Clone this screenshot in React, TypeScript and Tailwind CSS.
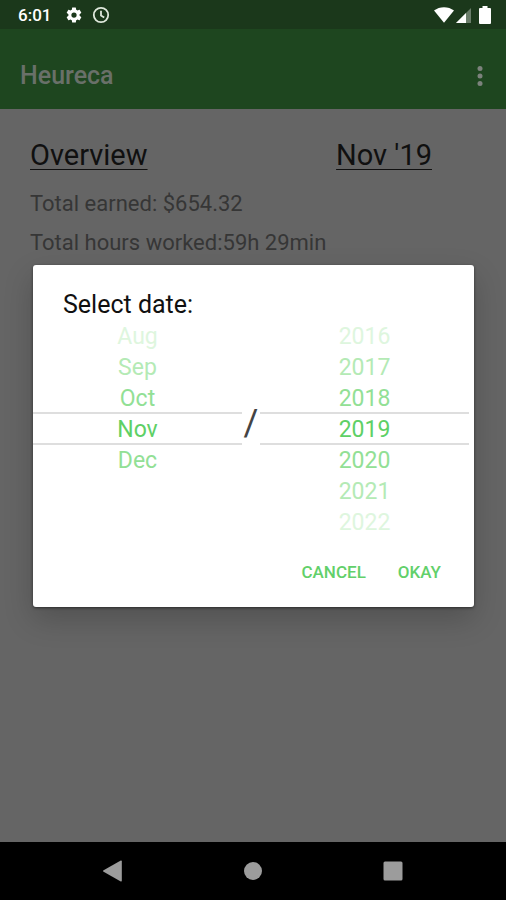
import { useState } from "react";

const months = ["Aug", "Sep", "Oct", "Nov", "Dec"];
const years = ["2016", "2017", "2018", "2019", "2020", "2021", "2022"];

// text colour by distance from the selected row
const fade = ["text-[#5ed065]", "text-[#92e095]", "text-[#b4eab5]", "text-[#def6de]"];

function StatusBar() {
  return (
    <div className="flex h-[29px] shrink-0 items-center justify-between bg-[#1b381b] pt-px pl-[18px] pr-[15px] text-white">
      <div className="flex items-center">
        <span className="text-[17px] leading-5 font-medium">6:01</span>
        <svg className="ml-[14px]" width="18" height="18" viewBox="0 0 24 24" fill="currentColor" aria-hidden="true">
          <path d="M19.43 12.98c.04-.32.07-.64.07-.98s-.03-.66-.07-.98l2.11-1.65c.19-.15.24-.42.12-.64l-2-3.46c-.12-.22-.39-.3-.61-.22l-2.49 1c-.52-.4-1.08-.73-1.69-.98l-.38-2.65A.49.49 0 0 0 14 2h-4c-.25 0-.46.18-.49.42l-.38 2.65c-.61.25-1.17.59-1.69.98l-2.49-1c-.23-.09-.49 0-.61.22l-2 3.46c-.13.22-.07.49.12.64l2.11 1.65c-.04.32-.07.65-.07.98s.03.66.07.98l-2.11 1.65c-.19.15-.24.42-.12.64l2 3.46c.12.22.39.3.61.22l2.49-1c.52.4 1.08.73 1.69.98l.38 2.65c.03.24.24.42.49.42h4c.25 0 .46-.18.49-.42l.38-2.65c.61-.25 1.17-.59 1.69-.98l2.49 1c.23.09.49 0 .61-.22l2-3.46c.12-.22.07-.49-.12-.64l-2.11-1.65zM12 15.5a3.5 3.5 0 1 1 0-7 3.5 3.5 0 0 1 0 7z" />
        </svg>
        <svg className="ml-[9px]" width="18" height="18" viewBox="0 0 18 18" fill="none" stroke="#dfe8dc" strokeWidth="1.8" aria-hidden="true">
          <circle cx="9" cy="9" r="7.2" />
          <path d="M9 4.8V9.4l3.2 2" />
        </svg>
      </div>
      <div className="flex items-center">
        <svg width="20" height="16" viewBox="0 0 20 16" fill="currentColor" aria-hidden="true">
          <path d="M0 3.6C5.6-.9 14.4-.9 20 3.6L10 15.8z" />
        </svg>
        <svg className="ml-[2px]" width="16" height="16" viewBox="0 0 16 16" fill="currentColor" aria-hidden="true">
          <path d="M0 16 15 1v15z" opacity=".35" />
          <path d="M0 16 10 6v10z" />
        </svg>
        <svg className="ml-[7px]" width="12" height="18" viewBox="0 0 12 18" fill="currentColor" aria-hidden="true">
          <path d="M3.5 0h5v2H11a1 1 0 0 1 1 1v14a1 1 0 0 1-1 1H1a1 1 0 0 1-1-1V3a1 1 0 0 1 1-1h2.5z" />
        </svg>
      </div>
    </div>
  );
}

function AppBar() {
  return (
    <header className="flex h-20 items-center justify-between bg-[#1e461f] pt-[13px] pl-5 pr-4">
      <h1 className="text-[25px] leading-8 font-medium text-[#697069]">Heureca</h1>
      <button type="button" aria-label="More options" className="text-[#7c827c]">
        <svg width="20" height="24" viewBox="0 0 20 24" fill="currentColor" aria-hidden="true">
          <circle cx="10" cy="4.5" r="2.5" />
          <circle cx="10" cy="12" r="2.5" />
          <circle cx="10" cy="19.5" r="2.5" />
        </svg>
      </button>
    </header>
  );
}

function Wheel({
  label,
  items,
  value,
  onChange,
}: {
  label: string;
  items: string[];
  value: string;
  onChange: (v: string) => void;
}) {
  const selected = items.indexOf(value);
  return (
    <div role="listbox" aria-label={label} className="flex flex-1 flex-col">
      {items.map((item, i) => (
        <button
          key={item}
          type="button"
          role="option"
          aria-selected={i === selected}
          onClick={() => onChange(item)}
          className={`h-[31px] text-center text-[23px] leading-[31px] ${fade[Math.min(Math.abs(i - selected), 3)]} ${
            i === selected ? "shadow-[0_-2px_0_#dedede,inset_0_-2px_0_#dedede]" : ""
          }`}
        >
          {item}
        </button>
      ))}
    </div>
  );
}

function DateDialog() {
  const [month, setMonth] = useState("Nov");
  const [year, setYear] = useState("2019");

  return (
    <div className="absolute inset-0 flex items-center pl-[33px] pr-8">
      <div
        role="dialog"
        aria-labelledby="dialog-title"
        className="w-full rounded-[3px] bg-white pt-6 pb-[15px] shadow-[0_12px_30px_rgba(0,0,0,0.2),0_1px_3px_rgba(0,0,0,0.5)]"
      >
        <h2 id="dialog-title" className="px-[30px] text-[25px] leading-8 text-[#101010]">
          Select date:
        </h2>
        <div className="flex pr-[5px]">
          <Wheel label="Month" items={months} value={month} onChange={setMonth} />
          <span className="w-[18px] self-center pb-3 text-center text-[36px] leading-10 text-[#444]">/</span>
          <Wheel label="Year" items={years} value={year} onChange={setYear} />
        </div>
        <div className="flex justify-end gap-8 pt-[14px] pr-[33px] text-[17px] leading-10 font-medium text-[#62d06a]">
          <button type="button">CANCEL</button>
          <button type="button">OKAY</button>
        </div>
      </div>
    </div>
  );
}

function NavBar() {
  return (
    <nav className="flex h-[58px] shrink-0 items-center justify-center gap-[120px] bg-black text-[#9c9c9c]">
      <button type="button" aria-label="Back">
        <svg width="20" height="22" viewBox="0 0 20 22" fill="currentColor" aria-hidden="true">
          <path d="M.6 10.2 17.8.6c.6-.3 1 0 1 .6v19.6c0 .6-.4.9-1 .6L.6 11.8c-.7-.4-.7-1.2 0-1.6z" />
        </svg>
      </button>
      <button type="button" aria-label="Home">
        <svg width="20" height="20" viewBox="0 0 20 20" fill="currentColor" aria-hidden="true">
          <circle cx="10" cy="10" r="9" />
        </svg>
      </button>
      <button type="button" aria-label="Recent apps">
        <svg width="20" height="20" viewBox="0 0 20 20" fill="currentColor" aria-hidden="true">
          <rect x=".5" y=".5" width="19" height="19" rx="1.5" />
        </svg>
      </button>
    </nav>
  );
}

export default function App() {
  return (
    <div className="flex min-h-screen flex-col bg-[#656565] font-[Roboto,sans-serif]">
      <StatusBar />
      <div className="relative flex-1">
        <AppBar />
        <main className="px-[30px] pt-7">
          <div className="flex justify-between pr-[44px] text-[29px] leading-9 text-[#101010] underline decoration-1 underline-offset-4">
            <h2>Overview</h2>
            <h2>Nov '19</h2>
          </div>
          <div className="pt-[11px] text-[22px] leading-[39px] text-[#363636]">
            <p>Total earned: $654.32</p>
            <p>Total hours worked:59h 29min</p>
          </div>
        </main>
        <DateDialog />
      </div>
      <NavBar />
    </div>
  );
}
